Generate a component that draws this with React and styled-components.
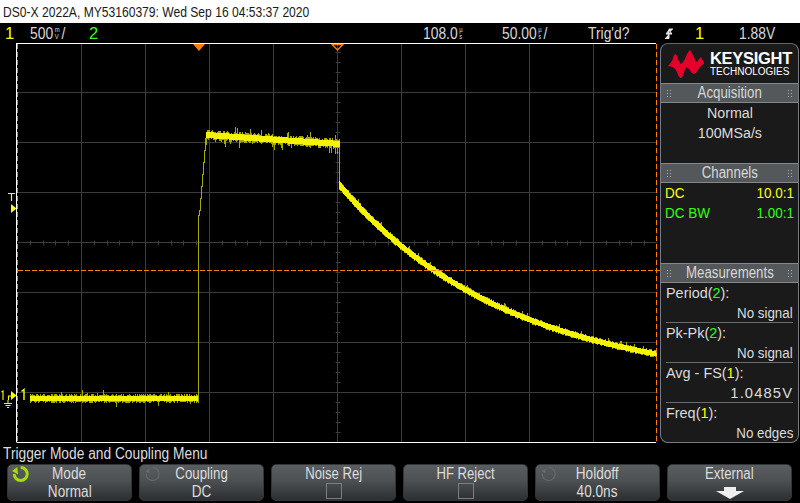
import React from 'react'
import styled, { createGlobalStyle } from 'styled-components'

const GlobalStyle = createGlobalStyle`
  html, body {
    margin: 0;
    padding: 0;
    background: #000;
  }
  body {
    font-family: "Liberation Sans", sans-serif;
    color: #e0e0e0;
  }
`

const YELLOW = '#ffff00'
const GREEN = '#33ff11'
const ORANGE = '#ff8000'

// small repeatable noise so the trace looks the same on every load
function makeNoise(seed) {
  let s = seed
  return () => {
    s = (s * 16807) % 2147483647
    return (s - 1) / 2147483646
  }
}

function buildTrace() {
  const rnd = makeNoise(4711)
  let core = ''
  let dim = ''
  const col = (x, y1, y2, bright) => {
    const part = `M${x} ${y1}h1v${y2 - y1}h-1z`
    if (bright) core += part
    else dim += part
  }
  const noisy = (x, top, bottom, spike) => {
    col(x, top, bottom, true)
    if (rnd() < 0.7) col(x, top - 1 - Math.floor(rnd() * 2), top, false)
    if (rnd() < 0.7) col(x, bottom, bottom + 1 + Math.floor(rnd() * 2), false)
    if (rnd() < spike) col(x, top - 3 - Math.floor(rnd() * 5), top, false)
    if (rnd() < spike) col(x, bottom, bottom + 3 + Math.floor(rnd() * 6), false)
  }

  // baseline before the step
  for (let x = 30; x < 198; x++) noisy(x, 396, 401, 0.03)
  // rising edge
  col(198, 215, 403, false)
  for (let y = 132; y < 215; y++) {
    const x = 199 + Math.round(((215 - y) / 83) * 7)
    col(x, y, y + 2, false)
  }
  // plateau
  for (let x = 206; x < 340; x++) {
    const top = Math.round(132 + ((x - 206) / 134) * 9)
    noisy(x, top, top + 6, 0.1)
  }
  // fall back and decay
  col(339, 146, 184, false)
  for (let x = 339; x < 657; x++) {
    const y = 385 - 200 * Math.exp(-(x - 339) / 170)
    const slope = (200 / 170) * Math.exp(-(x - 339) / 170)
    const half = 2.6 * Math.sqrt(1 + slope * slope)
    const top = Math.round(y - half)
    const bottom = Math.round(y + half)
    col(x, top, bottom, true)
    if (rnd() < 0.5) col(x, top - 1, top, false)
    if (rnd() < 0.5) col(x, bottom, bottom + 1, false)
    if (rnd() < 0.06) col(x, top - 3, top, false)
  }
  return { core, dim }
}

function buildGrid() {
  let d = ''
  for (let x = 81; x < 657; x += 64) d += `M${x} 43V442`
  for (let y = 92; y < 442; y += 50) d += `M17 ${y}H657`
  // minor ticks on the centre axes
  for (let y = 52; y < 442; y += 10) d += `M335 ${y}h5`
  for (let i = 1; i < 50; i++) {
    const x = Math.round(17 + i * 12.8)
    d += `M${x} 240v5`
  }
  return d
}

function buildOrangeDashes() {
  let d = ''
  for (let y = 44; y < 442; y += 8) d += `M17 ${y}h1v5h-1zM656 ${y}h1v5h-1z`
  for (let x = 18; x < 657; x += 7) d += `M${x} 270h5v1h-5z`
  return d
}

const trace = buildTrace()
const gridPath = buildGrid()
const orangePath = buildOrangeDashes()

function WaveArea() {
  let darkDashes = ''
  for (let y = 49; y < 442; y += 8) darkDashes += `M656.5 ${y}v3`
  return (
    <Plot viewBox="0 43 660 400" width="660" height="400">
      <path d={gridPath} transform="translate(.5 .5)" stroke="#3c3c3c" fill="none" />
      <path d="M16.5 43V442M16.5 43.5H656" stroke="#fff" fill="none" />
      <path d="M16.5 442.5H656" stroke="#fff" fill="none" />
      <path d={darkDashes} stroke="#10204a" fill="none" />
      <path d={trace.dim} fill="#a8a800" />
      <path d={trace.core} fill="#f4f400" />
      <path d={orangePath} fill={ORANGE} />
      {/* trigger time markers */}
      <path d="M193 44H205L199 51Z" fill={ORANGE} />
      <path d="M332 44.5H343L337.5 50Z" fill="none" stroke={ORANGE} strokeWidth="1.3" />
      {/* trigger level */}
      <path d="M8 193.5H15M11.5 193.5V201" stroke={YELLOW} strokeWidth="1.2" fill="none" />
      <path d="M11 204L16.5 208.5L11 213Z" fill={YELLOW} />
      {/* channel one ground */}
      <path d="M1.5 392L3 391V400M8.5 400V396H12" stroke={YELLOW} strokeWidth="1.1" fill="none" />
      <path d="M11 391L16.5 395.5L11 400Z" fill={YELLOW} />
      <path d="M8 400V403M4 403.5H12M5.5 405.5H10.5M7 407.5H9" stroke={YELLOW} strokeWidth="1" fill="none" />
      <path d="M21.5 391.5L24 389.5V400" stroke={YELLOW} strokeWidth="1.4" fill="none" />
    </Plot>
  )
}

function KeysightLogo() {
  return (
    <LogoBox>
      <svg width="36" height="28" viewBox="0 0 36 28">
        <path
          d="M0 16L2 13.5L4 11L6 5L7.5 4L9 6L10 9L11.5 12.5L13 14L15 12L17 9L19 4L21 1L22 0L23.5 2L26 7L27.5 11L29 12L31 9L33 7L34 9L36 12.5V14L34 15L32 17L30 20L28 23L25 24L23 22L21 19L18 17L16.5 21L15 26L13.5 28L12 28L10 25L9 22L7 19L5 17L2 16.5Z"
          fill="#e4002b"
        />
      </svg>
      <LogoText>
        <LogoName>KEYSIGHT</LogoName>
        <LogoSub>TECHNOLOGIES</LogoSub>
      </LogoText>
    </LogoBox>
  )
}

function SectionHeader({ children }) {
  return (
    <Header>
      <Grip />
      <Squeezed $x={0.83}>{children}</Squeezed>
      <Grip />
    </Header>
  )
}

function Unit({ top, bottom }) {
  return (
    <UnitStack>
      <span>{top}</span>
      <span>{bottom}</span>
    </UnitStack>
  )
}

function LoopIcon({ active }) {
  const color = active ? '#a6dc0c' : '#666a6c'
  return (
    <LoopSvg width="18" height="18" viewBox="0 0 18 18">
      <path d="M8.7 1.5A6.5 6.5 0 1 1 2.2 8" fill="none" stroke={color} strokeWidth={active ? 3 : 1.1} />
      <path d={active ? 'M0 5L5.3 1L6 8.5Z' : 'M1.5 5L5.5 2.5V7.5Z'} fill={color} />
    </LoopSvg>
  )
}

const measurements = [
  { name: 'Period', ch: '2', value: 'No signal' },
  { name: 'Pk-Pk', ch: '2', value: 'No signal' },
  { name: 'Avg - FS', ch: '1', value: '1.0485V', wide: true },
  { name: 'Freq', ch: '1', value: 'No edges' },
]

export default function App() {
  return (
    <Screen>
      <GlobalStyle />
      <TitleBar>
        <Squeezed $x={0.78} $origin="left">DS0-X 2022A, MY53160379: Wed Sep 16 04:53:37 2020</Squeezed>
      </TitleBar>
      <StatusRow>
        <StatusCell $w={30} $color={YELLOW} $pad={5}>1</StatusCell>
        <StatusCell $w={59}>
          <StatusText>500<Unit top="m" bottom="V" />/</StatusText>
        </StatusCell>
        <StatusCell $w={334} $color={GREEN}>2</StatusCell>
        <StatusCell $w={79}>
          <StatusText>108.0<Unit top="µ" bottom="s" /></StatusText>
        </StatusCell>
        <StatusCell $w={86}>
          <StatusText>50.00<Unit top="µ" bottom="s" />/</StatusText>
        </StatusCell>
        <StatusCell $w={77}>
          <StatusText>Trig'd?</StatusText>
        </StatusCell>
        <StatusCell $w={30}>
          <svg width="8" height="11" viewBox="0 0 8 11">
            <path d="M0 10.5H4V1H8M4 2L1 6H7Z" fill="#e8e8e8" stroke="#e8e8e8" strokeWidth="1" />
          </svg>
        </StatusCell>
        <StatusCell $w={44} $color={YELLOW}>1</StatusCell>
        <StatusCell $w={61}>
          <StatusText>1.88V</StatusText>
        </StatusCell>
      </StatusRow>
      <Main>
        <WaveArea />
        <SidePanel>
          <KeysightLogo />
          <SectionHeader>Acquisition</SectionHeader>
          <AcquireBody>
            <div><Squeezed $x={0.92}>Normal</Squeezed></div>
            <div><Squeezed $x={0.92}>100MSa/s</Squeezed></div>
          </AcquireBody>
          <SectionHeader>Channels</SectionHeader>
          <ChannelBody>
            <ChannelRow $color={YELLOW}>
              <Squeezed $x={0.87} $origin="left">DC</Squeezed>
              <Squeezed $x={0.87} $origin="right">10.0:1</Squeezed>
            </ChannelRow>
            <ChannelRow $color={GREEN}>
              <Squeezed $x={0.87} $origin="left">DC BW</Squeezed>
              <Squeezed $x={0.87} $origin="right">1.00:1</Squeezed>
            </ChannelRow>
          </ChannelBody>
          <SectionHeader>Measurements</SectionHeader>
          <MeasureList>
            {measurements.map((m) => (
              <Measure key={m.name}>
                <div>
                  <Squeezed $x={0.93} $origin="left">
                    {m.name}(<ChannelNum $color={m.ch === '1' ? YELLOW : GREEN}>{m.ch}</ChannelNum>):
                  </Squeezed>
                </div>
                <MeasureValue $wide={m.wide}>
                  <Squeezed $x={m.wide ? 0.95 : 0.86} $origin="right">{m.value}</Squeezed>
                </MeasureValue>
              </Measure>
            ))}
          </MeasureList>
        </SidePanel>
      </Main>
      <MenuTitle>
        <Squeezed $x={0.86} $origin="left">Trigger Mode and Coupling Menu</Squeezed>
      </MenuTitle>
      <SoftKeys>
        <SoftKey>
          <LoopIcon active />
          <Squeezed $x={0.85}>Mode</Squeezed>
          <Squeezed $x={0.85}>Normal</Squeezed>
        </SoftKey>
        <SoftKey>
          <LoopIcon />
          <Squeezed $x={0.83}>Coupling</Squeezed>
          <Squeezed $x={0.85}>DC</Squeezed>
        </SoftKey>
        <SoftKey>
          <Squeezed $x={0.82}>Noise Rej</Squeezed>
          <CheckBox />
        </SoftKey>
        <SoftKey>
          <Squeezed $x={0.82}>HF Reject</Squeezed>
          <CheckBox />
        </SoftKey>
        <SoftKey>
          <LoopIcon />
          <Squeezed $x={0.85}>Holdoff</Squeezed>
          <Squeezed $x={0.85}>40.0ns</Squeezed>
        </SoftKey>
        <SoftKey>
          <Squeezed $x={0.83}>External</Squeezed>
          <DownArrow width="28" height="12" viewBox="0 0 28 12">
            <path d="M8 0H20V4H28L14 12L0 4H8Z" fill="#eee" />
          </DownArrow>
        </SoftKey>
      </SoftKeys>
    </Screen>
  )
}

const Screen = styled.div`
  width: 800px;
  height: 503px;
  overflow: hidden;
  background: #000;
  display: flex;
  flex-direction: column;
`

// the scope's bitmap font is far narrower than anything installed
const Squeezed = styled.span`
  display: inline-block;
  white-space: nowrap;
  transform: scaleX(${(p) => p.$x});
  transform-origin: ${(p) => p.$origin || 'center'} center;
`

const TitleBar = styled.div`
  height: 23px;
  background: #fff;
  color: #1a1a1a;
  font-size: 15.5px;
  line-height: 23px;
  padding-left: 3px;
  white-space: nowrap;
`

const StatusRow = styled.div`
  height: 20px;
  display: flex;
  align-items: center;
  font-size: 16.5px;
`

const StatusCell = styled.div`
  width: ${(p) => p.$w}px;
  padding-left: ${(p) => p.$pad || 0}px;
  box-sizing: border-box;
  display: flex;
  align-items: center;
  color: ${(p) => p.$color || '#d8d8d8'};
`

const StatusText = styled.span`
  display: inline-flex;
  align-items: center;
  white-space: nowrap;
  transform: scaleX(0.84);
  transform-origin: left center;
`

const UnitStack = styled.span`
  display: inline-flex;
  flex-direction: column;
  font-size: 7px;
  line-height: 7px;
  margin: 0 2px;
`

const Main = styled.div`
  display: flex;
  height: 400px;
`

const Plot = styled.svg`
  display: block;
  flex: none;
`

const SidePanel = styled.div`
  width: 139px;
  box-sizing: border-box;
  display: flex;
  flex-direction: column;
  background: #1a1a1a;
  border: 1px solid #7a7d7f;
  border-top-color: #666;
  border-radius: 8px;
  overflow: hidden;
  font-size: 15.5px;
`

const LogoBox = styled.div`
  height: 39px;
  flex: none;
  display: flex;
  align-items: center;
  gap: 6px;
  padding-left: 7px;
`

const LogoText = styled.div`
  display: flex;
  flex-direction: column;
  color: #fff;
`

const LogoName = styled.span`
  font-weight: 700;
  font-size: 16.5px;
  line-height: 15px;
  letter-spacing: -0.3px;
`

const LogoSub = styled.span`
  font-size: 10px;
  line-height: 11px;
`

const Header = styled.div`
  height: 20px;
  flex: none;
  box-sizing: border-box;
  display: flex;
  align-items: center;
  justify-content: space-between;
  padding: 0 5px;
  background: #54585a;
  border-top: 1px solid #85888a;
  border-bottom: 1px solid #85888a;
  color: #d8d8d8;
  font-size: 16px;
`

const Grip = styled.i`
  width: 6px;
  height: 9px;
  background-image: radial-gradient(circle, #b0b0b0 0.8px, transparent 1px);
  background-size: 3px 3px;
`

const AcquireBody = styled.div`
  height: 60px;
  flex: none;
  text-align: center;
  line-height: 20px;
  color: #dcdcdc;
`

const ChannelBody = styled.div`
  height: 80px;
  flex: none;
  padding: 0 4px;
  box-sizing: border-box;
`

const ChannelRow = styled.div`
  display: flex;
  justify-content: space-between;
  line-height: 20px;
  color: ${(p) => p.$color};
`

const MeasureList = styled.div`
  display: flex;
  flex-direction: column;
  padding: 0 5px;
`

const Measure = styled.div`
  height: 40px;
  box-sizing: border-box;
  line-height: 20px;
  color: #dcdcdc;
  border-bottom: 1px solid #6a6d6f;

  &:last-child {
    border-bottom: none;
  }
`

const ChannelNum = styled.span`
  color: ${(p) => p.$color};
`

const MeasureValue = styled.div`
  text-align: right;
  letter-spacing: ${(p) => (p.$wide ? '1.2px' : '0')};
`

const MenuTitle = styled.div`
  height: 21px;
  line-height: 21px;
  padding-left: 3px;
  font-size: 16px;
  color: #dcdcdc;
`

const SoftKeys = styled.div`
  display: flex;
  gap: 7px;
  padding-left: 7px;
`

const SoftKey = styled.div`
  position: relative;
  width: 125px;
  height: 37px;
  box-sizing: border-box;
  border: 1px solid #333638;
  border-radius: 5px;
  background: linear-gradient(#5a5e60 0%, #4c5052 45%, #2c2f31 100%);
  display: flex;
  flex-direction: column;
  align-items: center;
  justify-content: space-between;
  font-size: 16px;
  line-height: 18px;
  color: #dcdcdc;
`

const LoopSvg = styled.svg`
  position: absolute;
  left: 4px;
  top: 1px;
`

const DownArrow = styled.svg`
  margin-bottom: 1px;
`

const CheckBox = styled.i`
  width: 14px;
  height: 14px;
  border: 1px solid #7c7f81;
  margin-bottom: 1px;
`
